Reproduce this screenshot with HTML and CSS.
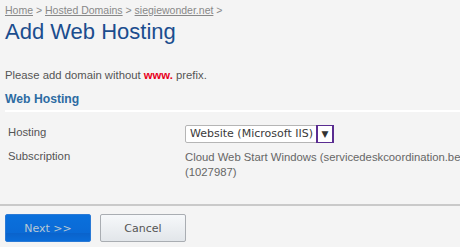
FILE: index.html
```html
<!DOCTYPE html>
<html>
<head>
<meta charset="utf-8">
<link rel="stylesheet" href="styles.css">
</head>
<body>
<div class="page">
  <div class="crumbs"><a href="#">Home</a> &gt; <a href="#">Hosted Domains</a> &gt; <a href="#">siegiewonder.net</a> &gt;</div>
  <h1 class="title">Add Web Hosting</h1>
  <p class="note">Please add domain without <b class="www">www.</b> prefix.</p>
  <h2 class="section">Web Hosting</h2>
  <div class="form">
    <div class="label">Hosting</div>
    <div class="value">
      <div class="select"><span class="sel-text">Website (Microsoft IIS)</span><span class="sel-arrow">&#9660;</span></div>
    </div>
    <div class="label">Subscription</div>
    <div class="value text">Cloud Web Start Windows (servicedeskcoordination.be<br>(1027987)</div>
  </div>
</div>
<div class="actions">
  <button class="btn primary">Next &gt;&gt;</button>
  <button class="btn secondary">Cancel</button>
</div>
</body>
</html>
```
FILE: styles.css
```css
html, body {
  margin: 0;
  padding: 0;
  background: #f4f4f4;
  overflow: hidden;
  width: 460px;
  height: 247px;
}
body {
  font-family: "Liberation Sans", Arial, sans-serif;
  color: #555;
}
.page {
  padding: 4px 0 0 5px;
}
.crumbs {
  font-size: 10.5px;
  line-height: 13px;
  color: #888;
}
.crumbs a {
  color: #888;
  text-decoration: underline;
}
.title {
  margin: 2px 0 0 0;
  font-size: 22px;
  line-height: 26px;
  font-weight: normal;
  color: #1b4d8e;
}
.note {
  margin: 23px 0 0 0;
  font-size: 11.3px;
  line-height: 14px;
  color: #555;
}
.www {
  color: #e8001c;
  font-weight: bold;
}
.section {
  margin: 10px 0 0 0;
  font-size: 12.2px;
  line-height: 15px;
  font-weight: bold;
  color: #2c6ba2;
  padding-bottom: 3px;
  border-bottom: 2px solid #ffffff;
}
.form {
  display: grid;
  grid-template-columns: 177px 1fr;
  row-gap: 6px;
  margin-top: 13px;
  padding-left: 3px;
  font-size: 11.3px;
  line-height: 15px;
}
.label {
  color: #555;
}
.value {
  white-space: nowrap;
  color: #666;
  overflow: hidden;
}
.select {
  display: inline-flex;
  align-items: stretch;
  height: 16px;
  background: #fff;
  border: 1px solid #b5b5b5;
  border-radius: 2px;
  font-family: "DejaVu Sans", sans-serif;
  font-size: 11px;
  line-height: 16px;
  color: #333;
}
.sel-text {
  padding: 0 3px 0 4px;
  color: #3a3a3a;
}
.sel-arrow {
  width: 14px;
  margin: -2px -1px -2px 0;
  border: 2px solid #5a2d91;
  text-align: center;
  font-size: 9px;
  line-height: 16px;
  color: #333;
}
.value.text {
  padding-top: 1px;
}
.actions {
  margin-top: 24px;
  border-top: 2px solid #c9c9c9;
  padding: 8px 0 0 5px;
  display: flex;
  gap: 9px;
}
.btn {
  width: 86px;
  height: 28px;
  border-radius: 2px;
  font-family: "DejaVu Sans", sans-serif;
  font-size: 11px;
  padding: 0;
  margin: 0;
}
.primary {
  background: linear-gradient(#0a70dc 0%, #0a6ad6 70%, #0a63cc 71%, #0a6cd8 100%);
  border: 1px solid #2a7ad6;
  color: #b8c8d4;
}
.secondary {
  background: linear-gradient(#f6f8fa, #e2e6ea);
  border: 1px solid #a9adb2;
  color: #555;
}
```
